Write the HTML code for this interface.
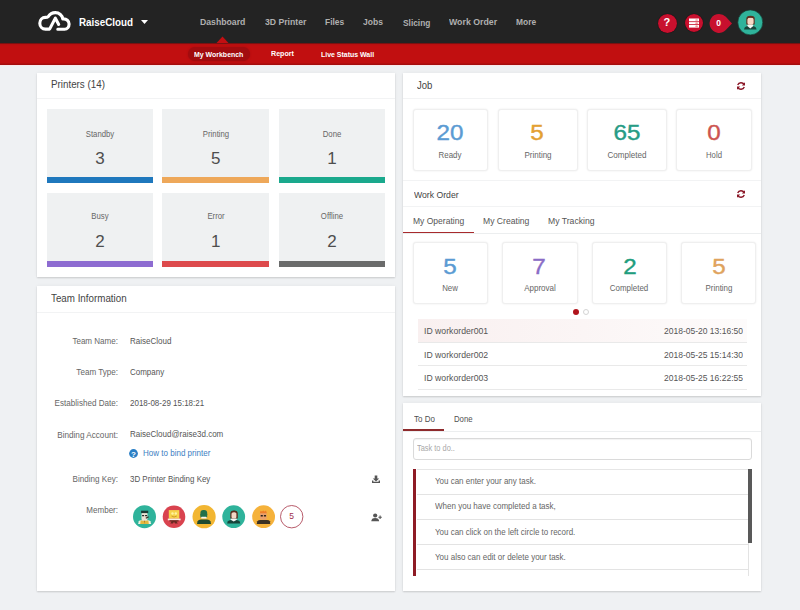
<!DOCTYPE html>
<html><head><meta charset="utf-8">
<style>
*{margin:0;padding:0;box-sizing:border-box}
html,body{width:800px;height:610px;overflow:hidden;background:#eff1f3;font-family:"Liberation Sans",sans-serif;color:#555}
.a{position:absolute}
.t{position:absolute;white-space:nowrap;line-height:1}
.panel{position:absolute;background:#fff;box-shadow:0 1px 1.5px rgba(0,0,0,.14),0 0 4px rgba(0,0,0,.05)}
.box{position:absolute;width:106.6px;height:73.4px;background:#eff1f2}
.box .bar{position:absolute;left:0;right:0;bottom:0;height:6px}
.card{position:absolute;background:#fff;border:1px solid #efefef;border-radius:3px;box-shadow:0 0 2px rgba(0,0,0,.09)}
.num{text-align:center;font-size:22.4px;-webkit-text-stroke:.4px currentColor;transform:scaleX(1.08)}
.hl{position:absolute;height:1px;background:#f2f3f4}
</style></head><body>
<div class="a" style="left:0;top:0;width:800px;height:43px;background:#232323"></div>
<div class="a" style="left:0;top:43px;width:800px;height:21.5px;background:linear-gradient(#5a1212 0,#b80f10 1.5px,#c10f10 3px,#c10f10 19.5px,#a50d0d 21.5px)"></div>
<div class="a" style="left:0;top:64.5px;width:800px;height:1px;background:#f8e8ea"></div>
<svg class="a" style="left:0;top:0" width="800" height="44" viewBox="0 0 800 44">
  <path d="M58.7,24.5 L55.35,18.1 L49.6,29.1 H45.45 C42.3,29.1 39.8,26.5 39.8,23.2 C39.8,19.9 42.3,17.4 45.3,17.4 C46.6,17.4 47.6,17.2 48.3,16.6 C49.8,14 52.4,12.6 55.35,12.6 C59.2,12.6 62.3,15.5 62.8,18.9 C66.6,18.6 69.1,21 69.1,24.1 C69.1,27 67.2,29.25 64.6,29.25 H57.8" fill="none" stroke="#fff" stroke-width="3.1" stroke-linecap="round" stroke-linejoin="round"/>
  <path d="M141,20 L148,20 L144.5,24 Z" fill="#fff"/>
  <path d="M216.5,43 L222.5,36.5 L228.5,43 Z" fill="#c20f12"/>
</svg>
<div class="a" style="left:187.5px;top:47px;width:62.5px;height:14px;border-radius:7px;background:#a20c0f;box-shadow:0 0 2px #a20c0f"></div>
<!-- right icons -->
<div class="a" style="left:657.7px;top:13.6px;width:19px;height:19px;border-radius:50%;background:#c8102e;box-shadow:0 0 1px #000"></div>
<div class="t" style="left:663.6px;top:16.9px;font-size:11px;font-weight:bold;color:#fff">?</div>
<div class="a" style="left:684.6px;top:13.6px;width:18.6px;height:18.6px;border-radius:50%;background:#c8102e;box-shadow:0 0 1px #000"></div>
<svg class="a" style="left:688px;top:17px" width="12" height="12" viewBox="0 0 12 12">
  <rect x="1" y="1.5" width="10" height="9.1" fill="#fff"/>
  <rect x="1" y="4.3" width="10" height="0.8" fill="#c8102e"/><rect x="1" y="7.2" width="10" height="0.8" fill="#c8102e"/>
  <rect x="7.3" y="2.4" width="2.6" height="1.2" rx=".6" fill="#e77"/><rect x="7.3" y="5.6" width="2.6" height="1.2" rx=".6" fill="#e77"/><rect x="7.3" y="8.6" width="2.6" height="1.2" rx=".6" fill="#e77"/>
</svg>
<svg class="a" style="left:708px;top:12px" width="25" height="23" viewBox="0 0 25 23">
  <path d="M11,1.9 A9.5,9.5 0 1 0 17.8,18.1 L24,11.4 L17.8,4.7 A9.5,9.5 0 0 0 11,1.9 Z" fill="#c8102e"/>
</svg>
<div class="t" style="left:716.3px;top:18.7px;font-size:8.5px;font-weight:bold;color:#fff">0</div>
<svg class="a" style="left:735px;top:7px" width="30" height="30" viewBox="735 7 30 30">
  <circle cx="750.3" cy="22.4" r="12.5" fill="#2fb39b" stroke="#17382f" stroke-width=".7"/>
  <path d="M744,29.6 L744.7,27.4 Q745.8,26 748,25.9 H752.6 Q754.8,26 755.9,27.4 L756.6,29.6Z" fill="#17453b"/>
  <path d="M747.3,25.9 L750.3,28.6 L753.3,25.9 L752.8,24.2 H747.8Z" fill="#f2f6f2"/>
  <path d="M746.3,24.5 V18.8 Q746.3,15.8 750.5,15.8 Q754.7,15.8 754.7,18.8 V24.5Z" fill="#5e3020"/>
  <rect x="747.4" y="17.8" width="6.2" height="7" rx="2" fill="#f5d8c6"/>
  <path d="M747,19 Q749.5,16.5 754.2,18.3 V17 Q750.5,15.5 747,17.3Z" fill="#5e3020"/>
</svg>

<!-- panels -->
<div class="panel" style="left:36.8px;top:73px;width:358px;height:203.8px"></div>
<div class="hl" style="left:36.8px;top:98px;width:358px"></div>
<div class="box" style="left:46.8px;top:109.4px;height:74.0px"><div class="bar" style="background:#1f78bd"></div></div><div class="t" style="left:46.8px;width:106.6px;text-align:center;top:150.20px;font-size:17px;color:#4e4e4e">3</div><div class="box" style="left:162.4px;top:109.4px;height:74.0px"><div class="bar" style="background:#eea85a"></div></div><div class="t" style="left:162.4px;width:106.6px;text-align:center;top:150.20px;font-size:17px;color:#4e4e4e">5</div><div class="box" style="left:278.6px;top:109.4px;height:74.0px"><div class="bar" style="background:#1aa98d"></div></div><div class="t" style="left:278.6px;width:106.6px;text-align:center;top:150.20px;font-size:17px;color:#4e4e4e">1</div><div class="box" style="left:46.8px;top:192.8px;height:74.2px"><div class="bar" style="background:#8d6bd1"></div></div><div class="t" style="left:46.8px;width:106.6px;text-align:center;top:233.00px;font-size:17px;color:#4e4e4e">2</div><div class="box" style="left:162.4px;top:192.8px;height:74.2px"><div class="bar" style="background:#dd4a4c"></div></div><div class="t" style="left:162.4px;width:106.6px;text-align:center;top:233.00px;font-size:17px;color:#4e4e4e">1</div><div class="box" style="left:278.6px;top:192.8px;height:74.2px"><div class="bar" style="background:#6a6b6b"></div></div><div class="t" style="left:278.6px;width:106.6px;text-align:center;top:233.00px;font-size:17px;color:#4e4e4e">2</div>
<div class="panel" style="left:36.8px;top:286px;width:358px;height:305px"></div>
<div class="hl" style="left:36.8px;top:312px;width:358px"></div>
<svg class="a" style="left:129.3px;top:448.6px" width="9" height="9" viewBox="0 0 9 9"><circle cx="4.5" cy="4.5" r="4.4" fill="#2a7fc6"/><text x="4.5" y="7.6" font-family="Liberation Sans" font-size="8" font-weight="bold" fill="#fff" text-anchor="middle">?</text></svg>
<svg class="a" style="left:130px;top:500px" width="180" height="35" viewBox="130 500 180 35">
  <circle cx="144.5" cy="516.7" r="11.5" fill="#2fb39b"/>
  <path d="M138.1,523.9 L138.8,521.2 Q139.5,520.3 141,520.2 H148 Q149.5,520.3 150.3,521.2 L151.2,523.9Z" fill="#f0f0e0"/>
  <path d="M140.2,523.9 L140.6,520.4 H148.4 L148.8,523.9Z" fill="#e3b93f"/>
  <path d="M144,520.4 L144.5,523.9 L145,520.4Z" fill="#a07020"/>
  <rect x="141.5" y="512.5" width="6" height="8" rx="1.5" fill="#ece4d4"/>
  <rect x="141.1" y="510.7" width="7.1" height="2.4" fill="#1c3d36"/>
  <rect x="142" y="515" width="2.2" height="1.3" rx=".5" fill="#222"/><rect x="145" y="515" width="2.2" height="1.3" rx=".5" fill="#222"/>
  <path d="M145.8,518.2 L148.6,516.8" stroke="#3a2a20" stroke-width="1.1"/>

  <circle cx="174" cy="516.7" r="11.3" fill="#d9434f"/>
  <rect x="168.8" y="510.1" width="10.5" height="8.6" fill="#f6d44a"/>
  <circle cx="172.5" cy="513.5" r="1.2" fill="#fff3a0"/><circle cx="175.8" cy="513.5" r="1.2" fill="#fff3a0"/>
  <path d="M171.5,516 Q174,518 176.8,516" stroke="#c08020" stroke-width=".7" fill="none"/>
  <rect x="167.8" y="518.6" width="12.8" height="1.7" fill="#fbeee0"/>
  <path d="M169.5,520.3 H178.6 V521.5 H176.5 L177.8,523.6 H175 L174,521.8 L173,523.6 H170.3 L171.5,521.5 H169.5Z" fill="#6b2a22"/>

  <circle cx="204.1" cy="516.7" r="11.6" fill="#f2b632"/>
  <path d="M197,523.9 L197.6,521.2 Q198.5,519.8 201,519.6 H207 Q209.5,519.8 210.4,521.2 L211,523.9Z" fill="#1d4a30"/>
  <rect x="200.4" y="509.9" width="6.8" height="7.4" rx="3" fill="#22704a"/>
  <rect x="200.4" y="514" width="6.8" height="3.4" fill="#22704a"/>
  <rect x="201.2" y="516.8" width="5.4" height="1.8" rx=".6" fill="#f4f4f0"/>

  <circle cx="233.7" cy="516.7" r="11.4" fill="#2fb39b"/>
  <path d="M227.1,523.6 L227.7,521.4 Q228.6,520 231,519.9 H236.5 Q238.8,520 239.7,521.4 L240.4,523.6Z" fill="#17453b"/>
  <path d="M230.6,519.8 L233.7,521.6 L236.9,519.8 L236.5,518.3 H231Z" fill="#f4f7f4"/>
  <path d="M230.3,518.6 V513.5 Q230.3,510.5 234,510.5 Q237.8,510.5 237.8,513.5 V518.6Z" fill="#5a3020"/>
  <rect x="231.5" y="512.3" width="4.9" height="6.2" rx="1.5" fill="#f3d8c6"/>
  <path d="M231,513.3 Q233,511 237,512.5 V511.5 Q234,510 231,511.8Z" fill="#5a3020"/>

  <circle cx="263.6" cy="516.7" r="11.4" fill="#f5b23b"/>
  <path d="M256.7,523.9 L257.4,521.3 Q258.3,520.1 260.5,520 H267 Q269.2,520.1 269.9,521.3 L270.3,523.9Z" fill="#3b3124"/>
  <rect x="260" y="512.4" width="6.6" height="7.4" rx="1.2" fill="#e8a06c"/>
  <path d="M259.9,513.2 L260.5,510.7 L262,511.6 L263.2,510.4 L264.5,511.5 L266,510.5 L266.9,513.2Z" fill="#ef7f2a"/>
  <rect x="260.6" y="515" width="2.3" height="1.5" rx=".5" fill="#2a2018"/><rect x="263.8" y="515" width="2.3" height="1.5" rx=".5" fill="#2a2018"/>

  <circle cx="291.7" cy="516.7" r="11.2" fill="#fff" stroke="#b04a5a" stroke-width=".9"/>
</svg>
<div class="t" style="left:271.7px;width:40px;text-align:center;top:512.3px;font-size:8.5px;color:#a03050">5</div>
<svg class="a" style="left:371px;top:474.5px" width="10" height="9" viewBox="0 0 10 9"><path d="M3.7,0.6 H6.3 V3.6 H8.2 L5,6.6 L1.8,3.6 H3.7Z" fill="#555"/><path d="M1,5.6 V8 H9 V5.6 H7.6 V6.8 H2.4 V5.6Z" fill="#555"/></svg>
<svg class="a" style="left:371px;top:513px" width="11" height="9" viewBox="0 0 11 9"><circle cx="4.2" cy="2.5" r="2.1" fill="#555"/><path d="M0.3,8.3 Q0.3,4.9 4.2,4.9 Q8.1,4.9 8.1,8.3Z" fill="#555"/><path d="M7.4,4.2 H10.8 M9.1,2.5 V5.9" stroke="#555" stroke-width="1.1"/></svg>

<div class="panel" style="left:402.6px;top:73px;width:358.6px;height:322.5px"></div>
<div class="hl" style="left:402.6px;top:98px;width:358.6px"></div>
<div class="hl" style="left:402.6px;top:180.3px;width:358.6px"></div>
<div class="hl" style="left:402.6px;top:205.9px;width:358.6px"></div>
<div class="hl" style="left:402.6px;top:232.5px;width:358.6px;background:#eceeef"></div>
<div class="a" style="left:403px;top:231.6px;width:70.8px;height:1.8px;background:#a82a2d"></div>
<svg class="a" style="left:735.5px;top:81.2px" width="10" height="10" viewBox="0 0 10 10"><path d="M8.2,3.6 A3.6,3.6 0 0 0 1.7,3.9 M1.8,6.4 A3.6,3.6 0 0 0 8.3,6.1" fill="none" stroke="#8a1626" stroke-width="1.4"/><path d="M9,1.3 V4.5 H5.8Z M1,8.7 V5.5 H4.2Z" fill="#8a1626"/></svg>
<svg class="a" style="left:735.8px;top:188.8px" width="10" height="10" viewBox="0 0 10 10"><path d="M8.2,3.6 A3.6,3.6 0 0 0 1.7,3.9 M1.8,6.4 A3.6,3.6 0 0 0 8.3,6.1" fill="none" stroke="#8a1626" stroke-width="1.4"/><path d="M9,1.3 V4.5 H5.8Z M1,8.7 V5.5 H4.2Z" fill="#8a1626"/></svg>
<div class="card" style="left:412.9px;top:108.6px;width:75.40px;height:62.00px"></div><div class="t num" style="left:350.35px;width:200px;top:121.80px;color:#5b9bd3">20</div><div class="card" style="left:497.5px;top:108.6px;width:80.00px;height:62.00px"></div><div class="t num" style="left:437.40px;width:200px;top:121.80px;color:#e3a032">5</div><div class="card" style="left:587px;top:108.6px;width:80.00px;height:62.00px"></div><div class="t num" style="left:526.90px;width:200px;top:121.80px;color:#279c85">65</div><div class="card" style="left:676.25px;top:108.6px;width:75.75px;height:62.00px"></div><div class="t num" style="left:614.35px;width:200px;top:121.80px;color:#cd5450">0</div><div class="card" style="left:413px;top:242.4px;width:75.00px;height:61.20px"></div><div class="t num" style="left:350.00px;width:200px;top:255.60px;color:#5b9bd3">5</div><div class="card" style="left:502px;top:242.4px;width:75.50px;height:61.20px"></div><div class="t num" style="left:439.25px;width:200px;top:255.60px;color:#8a6cc6">7</div><div class="card" style="left:592.25px;top:242.4px;width:74.75px;height:61.20px"></div><div class="t num" style="left:529.50px;width:200px;top:255.60px;color:#1f9e7e">2</div><div class="card" style="left:681.1px;top:242.4px;width:75.40px;height:61.20px"></div><div class="t num" style="left:618.80px;width:200px;top:255.60px;color:#dfa35d">5</div>
<div class="a" style="left:573.2px;top:308.8px;width:6px;height:6px;border-radius:50%;background:#b0141c"></div>
<div class="a" style="left:582.5px;top:308.8px;width:6px;height:6px;border-radius:50%;border:1px solid #d4d4d4"></div>
<div class="a" style="left:418.1px;top:319.3px;width:329px;height:23px;background:linear-gradient(90deg,#f9f0f0,#fbf5f5 50%,#fdfbfb)"></div>
<div class="hl" style="left:418.1px;top:342px;width:329px;background:#e9e9e9"></div>
<div class="hl" style="left:418.1px;top:365.2px;width:329px;background:#e9e9e9"></div>
<div class="hl" style="left:418.1px;top:389px;width:329px;background:#e9e9e9"></div>

<div class="panel" style="left:402.6px;top:403px;width:358.6px;height:188.3px"></div>
<div class="hl" style="left:402.6px;top:430.8px;width:358.6px;background:#eceeef"></div>
<div class="a" style="left:403px;top:429.3px;width:41px;height:1.8px;background:#8e2a2c"></div>
<div class="a" style="left:413.2px;top:437.8px;width:338.8px;height:22px;border:1px solid #dadada;border-radius:3px;box-shadow:inset 0 1px 1px rgba(0,0,0,.05)"></div>
<div class="hl" style="left:416.5px;top:468.6px;width:331.5px;background:#e6e6e6"></div>
<div class="hl" style="left:416.5px;top:494px;width:331.5px;background:#e3e3e3"></div>
<div class="hl" style="left:416.5px;top:518.8px;width:331.5px;background:#e3e3e3"></div>
<div class="hl" style="left:416.5px;top:544px;width:331.5px;background:#e3e3e3"></div>
<div class="hl" style="left:416.5px;top:569px;width:331.5px;background:#e3e3e3"></div>
<div class="a" style="left:747.5px;top:468.6px;width:1px;height:107px;background:#e3e3e3"></div>
<div class="a" style="left:413.1px;top:468.6px;width:3.4px;height:107.4px;background:#8e1b25"></div>
<div class="a" style="left:748.2px;top:468.6px;width:3.5px;height:74.8px;background:#595959"></div>
<div class="t" style="top:17.00px;font-size:10.63px;color:#fff;font-weight:bold;left:78.50px;transform:scaleX(0.926);transform-origin:0 0;">RaiseCloud</div>
<div class="t" style="top:18.20px;font-size:9.21px;color:#b0b0b0;font-weight:bold;left:200.00px;transform:scaleX(0.943);transform-origin:0 0;">Dashboard</div>
<div class="t" style="top:18.23px;font-size:9.18px;color:#b0b0b0;font-weight:bold;left:264.50px;transform:scaleX(0.943);transform-origin:0 0;">3D Printer</div>
<div class="t" style="top:18.46px;font-size:8.91px;color:#b0b0b0;font-weight:bold;left:324.50px;transform:scaleX(0.943);transform-origin:0 0;">Files</div>
<div class="t" style="top:18.35px;font-size:9.04px;color:#b0b0b0;font-weight:bold;left:363.00px;transform:scaleX(0.943);transform-origin:0 0;">Jobs</div>
<div class="t" style="top:18.50px;font-size:8.86px;color:#b0b0b0;font-weight:bold;left:402.50px;transform:scaleX(0.943);transform-origin:0 0;">Slicing</div>
<div class="t" style="top:18.12px;font-size:9.31px;color:#b0b0b0;font-weight:bold;left:448.75px;transform:scaleX(0.943);transform-origin:0 0;">Work Order</div>
<div class="t" style="top:18.43px;font-size:8.94px;color:#b0b0b0;font-weight:bold;left:515.75px;transform:scaleX(0.943);transform-origin:0 0;">More</div>
<div class="t" style="top:50.62px;font-size:7.66px;color:#fff;font-weight:bold;left:194.25px;transform:scaleX(0.909);transform-origin:0 0;">My Workbench</div>
<div class="t" style="top:50.48px;font-size:7.82px;color:#fff;font-weight:bold;left:270.75px;transform:scaleX(0.909);transform-origin:0 0;">Report</div>
<div class="t" style="top:50.61px;font-size:7.66px;color:#fff;font-weight:bold;left:320.50px;transform:scaleX(0.909);transform-origin:0 0;">Live Status Wall</div>
<div class="t" style="top:80.44px;font-size:10.40px;color:#444;left:50.60px;transform:scaleX(0.943);transform-origin:0 0;">Printers (14)</div>
<div class="t" style="top:293.28px;font-size:10.77px;color:#444;left:50.50px;transform:scaleX(0.909);transform-origin:0 0;">Team Information</div>
<div class="t" style="top:336.57px;font-size:9.25px;color:#666;left:-282.00px;width:400px;text-align:right;transform:scaleX(0.870);transform-origin:100% 0;">Team Name:</div>
<div class="t" style="top:336.60px;font-size:9.21px;color:#555;left:129.50px;transform:scaleX(0.870);transform-origin:0 0;">RaiseCloud</div>
<div class="t" style="top:368.03px;font-size:9.30px;color:#666;left:-282.00px;width:400px;text-align:right;transform:scaleX(0.870);transform-origin:100% 0;">Team Type:</div>
<div class="t" style="top:368.13px;font-size:9.18px;color:#555;left:129.50px;transform:scaleX(0.870);transform-origin:0 0;">Company</div>
<div class="t" style="top:398.78px;font-size:9.30px;color:#666;left:-282.00px;width:400px;text-align:right;transform:scaleX(0.870);transform-origin:100% 0;">Established Date:</div>
<div class="t" style="top:398.88px;font-size:9.18px;color:#555;left:129.50px;transform:scaleX(0.870);transform-origin:0 0;">2018-08-29 15:18:21</div>
<div class="t" style="top:429.69px;font-size:9.40px;color:#666;left:-282.00px;width:400px;text-align:right;transform:scaleX(0.870);transform-origin:100% 0;">Binding Account:</div>
<div class="t" style="top:429.83px;font-size:9.23px;color:#555;left:129.50px;transform:scaleX(0.870);transform-origin:0 0;">RaiseCloud@raise3d.com</div>
<div class="t" style="top:474.83px;font-size:9.30px;color:#666;left:-282.00px;width:400px;text-align:right;transform:scaleX(0.870);transform-origin:100% 0;">Binding Key:</div>
<div class="t" style="top:474.96px;font-size:9.14px;color:#555;left:129.50px;transform:scaleX(0.870);transform-origin:0 0;">3D Printer Binding Key</div>
<div class="t" style="top:506.09px;font-size:9.23px;color:#666;left:-282.00px;width:400px;text-align:right;transform:scaleX(0.870);transform-origin:100% 0;">Member:</div>
<div class="t" style="top:448.93px;font-size:9.23px;color:#3d80c2;left:142.50px;transform:scaleX(0.870);transform-origin:0 0;">How to bind printer</div>
<div class="t" style="top:80.26px;font-size:10.79px;color:#444;left:416.50px;transform:scaleX(0.885);transform-origin:0 0;">Job</div>
<div class="t" style="top:190.31px;font-size:9.80px;color:#444;left:413.75px;transform:scaleX(0.885);transform-origin:0 0;">Work Order</div>
<div class="t" style="top:216.15px;font-size:9.63px;color:#555;left:412.75px;transform:scaleX(0.885);transform-origin:0 0;">My Operating</div>
<div class="t" style="top:216.07px;font-size:9.73px;color:#555;left:483.00px;transform:scaleX(0.885);transform-origin:0 0;">My Creating</div>
<div class="t" style="top:216.02px;font-size:9.78px;color:#555;left:548.25px;transform:scaleX(0.885);transform-origin:0 0;">My Tracking</div>
<div class="t" style="top:151.09px;font-size:9.11px;color:#666;left:250.10px;width:400px;text-align:center;transform:scaleX(0.870);transform-origin:50% 0;">Ready</div>
<div class="t" style="top:151.01px;font-size:9.21px;color:#666;left:337.60px;width:400px;text-align:center;transform:scaleX(0.870);transform-origin:50% 0;">Printing</div>
<div class="t" style="top:150.93px;font-size:9.30px;color:#666;left:426.85px;width:400px;text-align:center;transform:scaleX(0.870);transform-origin:50% 0;">Completed</div>
<div class="t" style="top:151.27px;font-size:8.89px;color:#666;left:514.00px;width:400px;text-align:center;transform:scaleX(0.870);transform-origin:50% 0;">Hold</div>
<div class="t" style="top:284.48px;font-size:9.00px;color:#666;left:250.40px;width:400px;text-align:center;transform:scaleX(0.870);transform-origin:50% 0;">New</div>
<div class="t" style="top:284.29px;font-size:9.22px;color:#666;left:339.60px;width:400px;text-align:center;transform:scaleX(0.870);transform-origin:50% 0;">Approval</div>
<div class="t" style="top:284.33px;font-size:9.18px;color:#666;left:429.15px;width:400px;text-align:center;transform:scaleX(0.870);transform-origin:50% 0;">Completed</div>
<div class="t" style="top:284.38px;font-size:9.12px;color:#666;left:518.70px;width:400px;text-align:center;transform:scaleX(0.870);transform-origin:50% 0;">Printing</div>
<div class="t" style="top:326.27px;font-size:9.73px;color:#555;left:424.30px;transform:scaleX(0.893);transform-origin:0 0;">ID workorder001</div>
<div class="t" style="top:326.42px;font-size:9.54px;color:#555;left:342.70px;width:400px;text-align:right;transform:scaleX(0.893);transform-origin:100% 0;">2018-05-20 13:16:50</div>
<div class="t" style="top:349.97px;font-size:9.73px;color:#555;left:424.30px;transform:scaleX(0.893);transform-origin:0 0;">ID workorder002</div>
<div class="t" style="top:350.12px;font-size:9.54px;color:#555;left:342.70px;width:400px;text-align:right;transform:scaleX(0.893);transform-origin:100% 0;">2018-05-25 15:14:30</div>
<div class="t" style="top:372.97px;font-size:9.73px;color:#555;left:424.30px;transform:scaleX(0.893);transform-origin:0 0;">ID workorder003</div>
<div class="t" style="top:373.12px;font-size:9.54px;color:#555;left:342.70px;width:400px;text-align:right;transform:scaleX(0.893);transform-origin:100% 0;">2018-05-25 16:22:55</div>
<div class="t" style="top:414.61px;font-size:9.20px;color:#505050;left:414.00px;transform:scaleX(0.870);transform-origin:0 0;">To Do</div>
<div class="t" style="top:414.83px;font-size:8.95px;color:#505050;left:453.80px;transform:scaleX(0.870);transform-origin:0 0;">Done</div>
<div class="t" style="top:444.49px;font-size:8.52px;color:#a8a8a8;left:417.00px;transform:scaleX(0.870);transform-origin:0 0;">Task to do..</div>
<div class="t" style="top:477.13px;font-size:9.18px;color:#666;left:435.00px;transform:scaleX(0.870);transform-origin:0 0;">You can enter your any task.</div>
<div class="t" style="top:502.29px;font-size:9.23px;color:#666;left:435.00px;transform:scaleX(0.870);transform-origin:0 0;">When you have completed a task,</div>
<div class="t" style="top:527.73px;font-size:9.18px;color:#666;left:435.00px;transform:scaleX(0.870);transform-origin:0 0;">You can click on the left circle to record.</div>
<div class="t" style="top:552.71px;font-size:9.20px;color:#666;left:435.00px;transform:scaleX(0.870);transform-origin:0 0;">You also can edit or delete your task.</div>
<div class="t" style="top:129.38px;font-size:9.71px;color:#666;left:-99.90px;width:400px;text-align:center;transform:scaleX(0.800);transform-origin:50% 0;">Standby</div>
<div class="t" style="top:129.38px;font-size:9.71px;color:#666;left:15.70px;width:400px;text-align:center;transform:scaleX(0.800);transform-origin:50% 0;">Printing</div>
<div class="t" style="top:129.38px;font-size:9.71px;color:#666;left:131.90px;width:400px;text-align:center;transform:scaleX(0.800);transform-origin:50% 0;">Done</div>
<div class="t" style="top:211.18px;font-size:9.71px;color:#666;left:-99.90px;width:400px;text-align:center;transform:scaleX(0.800);transform-origin:50% 0;">Busy</div>
<div class="t" style="top:211.18px;font-size:9.71px;color:#666;left:15.70px;width:400px;text-align:center;transform:scaleX(0.800);transform-origin:50% 0;">Error</div>
<div class="t" style="top:211.18px;font-size:9.71px;color:#666;left:131.90px;width:400px;text-align:center;transform:scaleX(0.800);transform-origin:50% 0;">Offline</div>
</body></html>
